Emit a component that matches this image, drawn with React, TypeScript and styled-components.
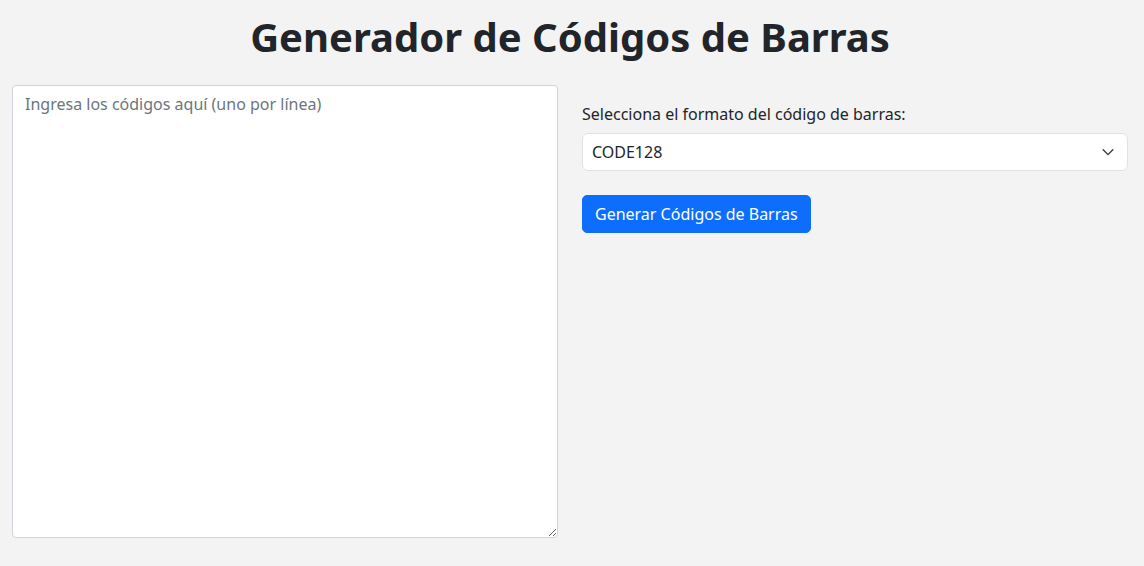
import React from "react";
import styled, { createGlobalStyle } from "styled-components";

const Global = createGlobalStyle`
  html, body { margin: 0; padding: 0; background: #f3f3f3; }
  body {
    font-family: "Noto Sans", "Open Sans", sans-serif;
    font-size: 16px;
    line-height: 1.5;
    color: #212529;
  }
  * { box-sizing: border-box; }
`;

const Page = styled.div`
  padding: 13px 0 0 12px;
`;

const Title = styled.h1`
  margin: 0 0 24px -12px;
  padding-right: 4px;
  font-size: 40px;
  line-height: 48px;
  font-weight: 700;
  text-align: center;
  color: #212529;
`;

const Columns = styled.div`
  display: grid;
  grid-template-columns: 546px 546px;
  column-gap: 24px;
  align-items: start;
`;

const CodesArea = styled.textarea`
  display: block;
  width: 546px;
  height: 453px;
  padding: 6px 12px;
  font-family: inherit;
  font-size: 16px;
  line-height: 1.5;
  color: #212529;
  background: #fff;
  border: 1px solid #ced4da;
  border-radius: 4px;
  outline: none;
  resize: vertical;
  &::placeholder { color: #6c757d; }
`;

const Side = styled.div`
  display: flex;
  flex-direction: column;
  align-items: flex-start;
  padding-top: 17px;
`;

const Label = styled.label`
  display: block;
  margin-bottom: 7px;
  font-size: 16px;
  line-height: 24px;
`;

const SelectWrap = styled.div`
  position: relative;
  width: 100%;
  margin-bottom: 24px;
`;

const Select = styled.select`
  display: block;
  width: 100%;
  height: 38px;
  padding: 6px 36px 6px 9px;
  font-family: inherit;
  font-size: 16px;
  line-height: 1.5;
  color: #212529;
  background: #fff;
  border: 1px solid #dee2e6;
  border-radius: 6px;
  appearance: none;
  -webkit-appearance: none;
  outline: none;
`;

const Chevron = styled.svg`
  position: absolute;
  right: 13px;
  top: 13px;
  width: 14px;
  height: 12px;
  pointer-events: none;
`;

const Button = styled.button`
  height: 38px;
  padding: 6px 12px;
  font-family: inherit;
  font-size: 16px;
  line-height: 1.5;
  color: #fff;
  background: #0d6efd;
  border: 1px solid #0d6efd;
  border-radius: 5px;
  cursor: pointer;
`;

export default function App() {
  return (
    <>
      <Global />
      <Page>
        <Title>Generador de Códigos de Barras</Title>
        <Columns>
          <CodesArea placeholder="Ingresa los códigos aquí (uno por línea)" />
          <Side>
            <Label htmlFor="fmt">Selecciona el formato del código de barras:</Label>
            <SelectWrap>
              <Select id="fmt" defaultValue="CODE128">
                <option value="CODE128">CODE128</option>
                <option value="EAN13">EAN13</option>
                <option value="UPC">UPC</option>
                <option value="CODE39">CODE39</option>
              </Select>
              <Chevron viewBox="0 0 16 12">
                <path d="M2.5 3.5l5.5 5.5 5.5-5.5" fill="none" stroke="#343a40" strokeWidth="1.6" strokeLinecap="round" strokeLinejoin="round" />
              </Chevron>
            </SelectWrap>
            <Button type="button">Generar Códigos de Barras</Button>
          </Side>
        </Columns>
      </Page>
    </>
  );
}
